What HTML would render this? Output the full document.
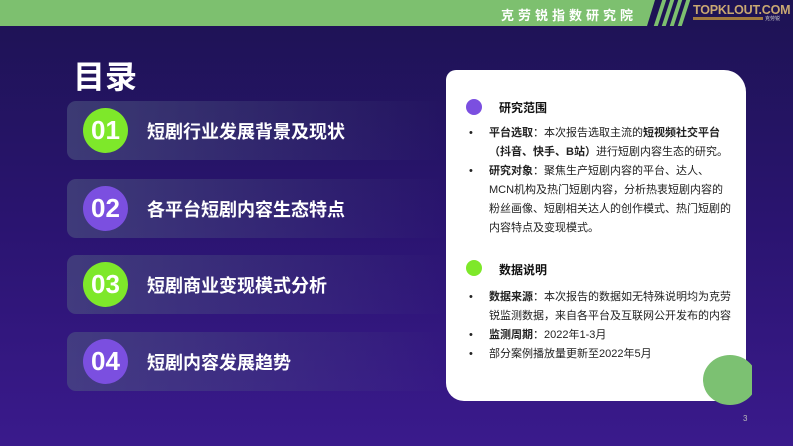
<!DOCTYPE html>
<html><head><meta charset="utf-8"><style>
*{margin:0;padding:0;box-sizing:border-box}
body{width:793px;height:446px;overflow:hidden;position:relative;font-family:"Liberation Sans","Noto Sans CJK SC",sans-serif;background:linear-gradient(180deg,#1d1353 0%,#2a1470 50%,#3a1a8c 100%)}
.bar{position:absolute;left:0;top:0;width:655px;height:26px;background:#7dc06f;clip-path:polygon(0 0,100% 0,calc(100% - 8px) 100%,0 100%)}
.bar span{position:absolute;left:501px;top:5px;color:#fff;font-weight:bold;font-size:13px;letter-spacing:4px}
.st{position:absolute;top:0;width:4px;height:26px;background:#7dc06f;transform:skewX(-18deg)}
.logo{position:absolute;left:693px;top:3px;color:#c9a872;font-weight:bold;font-size:12.5px;letter-spacing:-0.2px}
.logo2{position:absolute;left:693px;top:17px;width:70px;height:3px;background:#a07a40}
.logo3{position:absolute;left:765px;top:15px;font-size:5px;color:#ccc}
h1{position:absolute;left:73px;top:52px;color:#fff;font-size:32px;font-weight:bold}
.row{position:absolute;left:67px;width:380px;height:59px;border-radius:9px;background:linear-gradient(90deg,rgba(80,90,130,.55),rgba(60,50,120,0))}
.c{position:absolute;left:16px;top:7px;width:45px;height:45px;border-radius:50%;color:#fff;font-weight:bold;font-size:26px;text-align:center;line-height:45px}
.row b{position:absolute;left:80px;top:17px;color:#fff;font-size:18px}
.card{position:absolute;left:446px;top:70px;width:300px;height:331px;background:#fff;border-radius:10px 22px 10px 18px}
.dot{position:absolute;width:16px;height:16px;border-radius:50%}
.hd{position:absolute;left:499px;font-size:12px;font-weight:bold;color:#111}
ul{position:absolute;left:469px;width:262px;list-style:none;font-size:11px;line-height:19px;color:#222}
li{position:relative;padding-left:20px}
li:before{content:"•";position:absolute;left:0;top:0}
.leafw{position:absolute;left:703px;top:355px;width:49px;height:50px;overflow:hidden}
.leaf{width:54px;height:50px;background:#7cc172;border-radius:50%}
.pg{position:absolute;left:743px;top:414px;font-size:8px;color:#bbb}
</style></head><body>
<div class="bar"><span>克劳锐指数研究院</span></div>
<div class="st" style="left:658px"></div><div class="st" style="left:666px"></div><div class="st" style="left:674px"></div><div class="st" style="left:682px"></div>
<div class="logo">TOPKLOUT.COM</div><div class="logo2"></div><div class="logo3">克劳锐</div>
<h1>目录</h1>
<div class="row" style="top:101px"><div class="c" style="background:#7ee82a">01</div><b>短剧行业发展背景及现状</b></div>
<div class="row" style="top:179px"><div class="c" style="background:#7b4fe0">02</div><b>各平台短剧内容生态特点</b></div>
<div class="row" style="top:255px"><div class="c" style="background:#7ee82a">03</div><b>短剧商业变现模式分析</b></div>
<div class="row" style="top:332px"><div class="c" style="background:#7b4fe0">04</div><b>短剧内容发展趋势</b></div>
<div class="card"></div>
<div class="dot" style="left:466px;top:99px;background:#7b4fe0"></div>
<div class="hd" style="top:99px">研究范围</div>
<ul style="top:124px">
<li><b>平台选取</b>：本次报告选取主流的<b>短视频社交平台（抖音、快手、B站）</b>进行短剧内容生态的研究。</li>
<li><b>研究对象</b>：聚焦生产短剧内容的平台、达人、MCN机构及热门短剧内容，分析热衷短剧内容的粉丝画像、短剧相关达人的创作模式、热门短剧的内容特点及变现模式。</li>
</ul>
<div class="dot" style="left:466px;top:260px;background:#7ee82a"></div>
<div class="hd" style="top:261px">数据说明</div>
<ul style="top:288px">
<li><b>数据来源</b>：本次报告的数据如无特殊说明均为克劳锐监测数据，来自各平台及互联网公开发布的内容</li>
<li><b>监测周期</b>：2022年1-3月</li>
<li>部分案例播放量更新至2022年5月</li>
</ul>
<div class="leafw"><div class="leaf"></div></div>
<div class="pg">3</div>
</body></html>
